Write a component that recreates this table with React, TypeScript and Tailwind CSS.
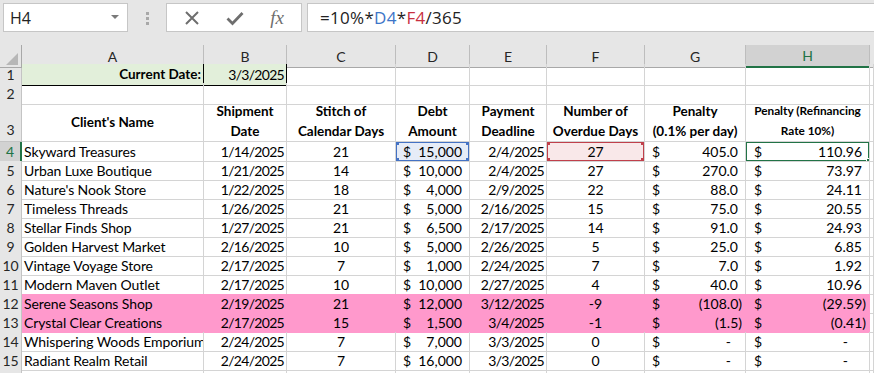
import React from 'react';

const GRID = 'grid grid-cols-[22px_182px_83px_109px_74px_77px_98px_101px_124px_1fr]';
const CELL = 'flex items-center whitespace-nowrap overflow-hidden border-r border-b';
const LINE = 'border-[#d4d4d4]';
const HEAD = 'flex items-center justify-center bg-[#e6e6e6] border-r border-b border-[#c4c4c4] text-[14px] text-[#262626]';
const DATE = 'tracking-[-0.7px]';

type Row = {
  n: number;
  name: string;
  ship: string;
  days: string;
  debt: string;
  due: string;
  over: string;
  pen: string;
  rate: string;
  pink?: boolean;
};

const rows: Row[] = [
  { n: 4, name: 'Skyward Treasures', ship: '1/14/2025', days: '21', debt: '15,000', due: '2/4/2025', over: '27', pen: '405.0', rate: '110.96' },
  { n: 5, name: 'Urban Luxe Boutique', ship: '1/21/2025', days: '14', debt: '10,000', due: '2/4/2025', over: '27', pen: '270.0', rate: '73.97' },
  { n: 6, name: "Nature's Nook Store", ship: '1/22/2025', days: '18', debt: '4,000', due: '2/9/2025', over: '22', pen: '88.0', rate: '24.11' },
  { n: 7, name: 'Timeless Threads', ship: '1/26/2025', days: '21', debt: '5,000', due: '2/16/2025', over: '15', pen: '75.0', rate: '20.55' },
  { n: 8, name: 'Stellar Finds Shop', ship: '1/27/2025', days: '21', debt: '6,500', due: '2/17/2025', over: '14', pen: '91.0', rate: '24.93' },
  { n: 9, name: 'Golden Harvest Market', ship: '2/16/2025', days: '10', debt: '5,000', due: '2/26/2025', over: '5', pen: '25.0', rate: '6.85' },
  { n: 10, name: 'Vintage Voyage Store', ship: '2/17/2025', days: '7', debt: '1,000', due: '2/24/2025', over: '7', pen: '7.0', rate: '1.92' },
  { n: 11, name: 'Modern Maven Outlet', ship: '2/17/2025', days: '10', debt: '10,000', due: '2/27/2025', over: '4', pen: '40.0', rate: '10.96' },
  { n: 12, name: 'Serene Seasons Shop', ship: '2/19/2025', days: '21', debt: '12,000', due: '3/12/2025', over: '-9', pen: '(108.0)', rate: '(29.59)', pink: true },
  { n: 13, name: 'Crystal Clear Creations', ship: '2/17/2025', days: '15', debt: '1,500', due: '3/4/2025', over: '-1', pen: '(1.5)', rate: '(0.41)', pink: true },
  { n: 14, name: 'Whispering Woods Emporium', ship: '2/24/2025', days: '7', debt: '7,000', due: '3/3/2025', over: '0', pen: '-', rate: '-' },
  { n: 15, name: 'Radiant Realm Retail', ship: '2/24/2025', days: '7', debt: '16,000', due: '3/3/2025', over: '0', pen: '-', rate: '-' },
];

const penPad = (v: string) => (v === '-' ? 'pr-[14px]' : v.startsWith('(') ? 'pr-[3px]' : 'pr-[7px]');
const ratePad = (v: string) => (v === '-' ? 'pr-[21px]' : v.startsWith('(') ? 'pr-[3px]' : 'pr-[7px]');

const Handles = ({ color }: { color: string }) => (
  <>
    <span className={`absolute -left-[3px] -top-[3px] h-[5px] w-[5px] ${color}`} />
    <span className={`absolute -right-[3px] -top-[3px] h-[5px] w-[5px] ${color}`} />
    <span className={`absolute -left-[3px] -bottom-[3px] h-[5px] w-[5px] ${color}`} />
    <span className={`absolute -right-[3px] -bottom-[3px] h-[5px] w-[5px] ${color}`} />
  </>
);

const Toolbar = () => (
  <div className="flex h-[45px] items-start pt-[3px] font-['Open_Sans',sans-serif]">
    <div className="ml-[3px] flex h-[29px] w-[125px] items-center justify-between border border-[#c6c6c6] bg-white pl-[6px] pr-[8px] text-[16px] text-[#222]">
      <span>H4</span>
      <svg width="8" height="5" viewBox="0 0 8 5">
        <path d="M0 0h8L4 4z" fill="#7a7a7a" />
      </svg>
    </div>
    <div className="flex w-[38px] flex-col items-center gap-[2px] pt-[9px]">
      <span className="h-[3px] w-[3px] bg-[#a8a8a8]" />
      <span className="h-[3px] w-[3px] bg-[#a8a8a8]" />
      <span className="h-[3px] w-[3px] bg-[#a8a8a8]" />
    </div>
    <div className="flex h-[29px] w-[136px] items-center justify-around border border-[#c6c6c6] bg-white px-[4px]">
      <svg width="16" height="16" viewBox="0 0 16 16">
        <path d="M2 2l12 12M14 2L2 14" stroke="#6e6e6e" strokeWidth="2" fill="none" />
      </svg>
      <svg width="18" height="16" viewBox="0 0 18 16">
        <path d="M1.5 8.5l5 5L16.5 3" stroke="#6e6e6e" strokeWidth="2.8" fill="none" />
      </svg>
      <span className="font-['Liberation_Serif',serif] text-[19px] italic leading-none text-[#6e6e6e]">fx</span>
    </div>
    <div className="ml-[5px] flex h-[29px] flex-1 items-center border-y border-l border-[#c6c6c6] bg-white pl-[12px] text-[17px] tracking-[0.3px] text-[#222]">
      <span>=10%*</span>
      <span className="text-[#3c75c8]">D4</span>
      <span>*</span>
      <span className="text-[#c8303f]">F4</span>
      <span>/365</span>
    </div>
  </div>
);

const ColumnHeader = () => (
  <div className={`${GRID} h-[19px]`}>
    <div className="relative border-r border-b border-[#a8a8a8] bg-[#e6e6e6]">
      <svg className="absolute right-[3px] bottom-[2px]" width="12" height="12" viewBox="0 0 12 12">
        <path d="M12 0V12H0z" fill="#b7b7b7" />
      </svg>
    </div>
    {['A', 'B', 'C', 'D', 'E', 'F', 'G'].map((c) => (
      <div key={c} className="flex items-center justify-center border-r border-b border-r-[#bdbdbd] border-b-[#a8a8a8] bg-[#e6e6e6] text-[14px] text-[#262626]">
        {c}
      </div>
    ))}
    <div className="flex items-center justify-center border-r border-b-2 border-r-[#bdbdbd] border-b-[#217346] bg-[#d2d2d2] text-[14px] text-[#217346]">
      H
    </div>
    <div className="border-b border-[#a8a8a8] bg-[#e6e6e6]" />
  </div>
);

export default function App() {
  return (
    <div className="h-[373px] w-[874px] overflow-hidden bg-[#e6e6e6] font-['Lato',sans-serif] text-black">
      <Toolbar />
      <ColumnHeader />
      <div className="bg-white text-[14px]">
        <div className={`${GRID} h-[19px]`}>
          <div className={HEAD}>1</div>
          <div className={`${CELL} justify-end border-r-black border-b-black bg-[#e2efda] pr-[2px] text-[13.5px] font-bold`}>Current Date:</div>
          <div className={`${CELL} ${DATE} justify-end border-r-black border-b-black bg-[#e2efda] pr-[2px]`}>3/3/2025</div>
          {[0, 1, 2, 3, 4, 5, 6].map((i) => (
            <div key={i} className={`${CELL} ${LINE}`} />
          ))}
        </div>
        <div className={`${GRID} h-[19px]`}>
          <div className={HEAD}>2</div>
          {[0, 1, 2, 3, 4, 5, 6, 7, 8].map((i) => (
            <div key={i} className={`${CELL} ${LINE}`} />
          ))}
        </div>
        <div className={`${GRID} h-[40px] text-[13.5px] font-bold leading-[20px]`}>
          <div className={`${HEAD} items-end pb-[1px] font-normal`}>3</div>
          <div className={`${CELL} ${LINE} justify-center`}>Client's Name</div>
          <div className={`${CELL} ${LINE} flex-col justify-end text-center`}>
            <span>Shipment</span>
            <span>Date</span>
          </div>
          <div className={`${CELL} ${LINE} flex-col justify-end text-center`}>
            <span>Stitch of</span>
            <span>Calendar Days</span>
          </div>
          <div className={`${CELL} ${LINE} flex-col justify-end text-center`}>
            <span>Debt</span>
            <span>Amount</span>
          </div>
          <div className={`${CELL} ${LINE} flex-col justify-end text-center`}>
            <span>Payment</span>
            <span>Deadline</span>
          </div>
          <div className={`${CELL} ${LINE} flex-col justify-end text-center`}>
            <span>Number of</span>
            <span>Overdue Days</span>
          </div>
          <div className={`${CELL} ${LINE} flex-col justify-end text-center`}>
            <span>Penalty</span>
            <span>(0.1% per day)</span>
          </div>
          <div className={`${CELL} ${LINE} flex-col justify-end text-center text-[11.8px]`}>
            <span>Penalty (Refinancing</span>
            <span>Rate 10%)</span>
          </div>
          <div className={`${CELL} ${LINE}`} />
        </div>

        {rows.map((r) => {
          const active = r.n === 4;
          const line = r.pink ? 'border-[#ff99cc] bg-[#ff99cc]' : LINE;
          return (
            <div key={r.n} className={`${GRID} h-[19px] leading-[19px]`}>
              <div
                className={
                  active
                    ? 'flex items-center justify-center border-b border-r-2 border-b-[#c4c4c4] border-r-[#217346] bg-[#d2d2d2] text-[14px] text-[#217346]'
                    : HEAD
                }
              >
                {r.n}
              </div>
              <div className={`${CELL} ${line} pl-[2px] tracking-[-0.1px]`}>{r.name}</div>
              <div className={`${CELL} ${line} ${DATE} justify-end pr-[2px]`}>{r.ship}</div>
              <div className={`${CELL} ${line} justify-center`}>{r.days}</div>
              <div className={`${CELL} ${line} relative justify-between pl-[7px] pr-[7px] ${active ? 'bg-[#e6ecf7]' : ''}`}>
                <span>$</span>
                <span>{r.debt}</span>
                {active && (
                  <div className="pointer-events-none absolute -top-px -left-px -right-px -bottom-px border-2 border-[#4472c4]">
                    <Handles color="bg-[#4472c4]" />
                  </div>
                )}
              </div>
              <div className={`${CELL} ${line} ${DATE} justify-end pr-[2px]`}>{r.due}</div>
              <div className={`${CELL} ${line} relative justify-center ${active ? 'bg-[#f9e8e9]' : ''}`}>
                {r.over}
                {active && (
                  <div className="pointer-events-none absolute -top-px -left-px -right-px -bottom-px border-2 border-[#c0404b]">
                    <Handles color="bg-[#c0404b]" />
                  </div>
                )}
              </div>
              <div className={`${CELL} ${line} justify-between pl-[7px] ${penPad(r.pen)}`}>
                <span>$</span>
                <span>{r.pen}</span>
              </div>
              <div className={`${CELL} ${line} relative justify-between pl-[8px] ${ratePad(r.rate)}`}>
                <span>$</span>
                <span>{r.rate}</span>
                {active && (
                  <div className="pointer-events-none absolute -top-px -left-px -right-px -bottom-px border-2 border-[#217346]">
                    <span className="absolute -right-[4px] -bottom-[4px] h-[6px] w-[6px] border border-white bg-[#217346]" />
                  </div>
                )}
              </div>
              <div className={`${CELL} ${LINE}`} />
            </div>
          );
        })}
        <div className={`${GRID} h-[10px]`}>
          <div className={HEAD} />
          {[0, 1, 2, 3, 4, 5, 6, 7, 8].map((i) => (
            <div key={i} className={`${CELL} ${LINE}`} />
          ))}
        </div>
      </div>
    </div>
  );
}
